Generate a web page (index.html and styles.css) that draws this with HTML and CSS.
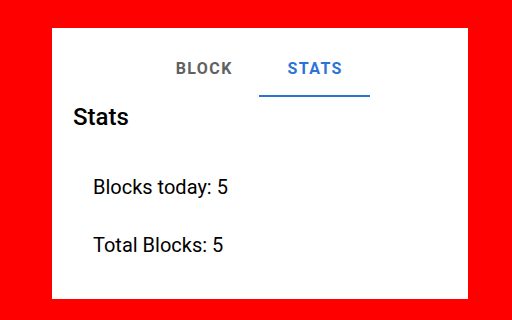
FILE: index.html
```html
<!DOCTYPE html>
<html>
<head>
<meta charset="utf-8">
<link rel="stylesheet" href="styles.css">
</head>
<body>
<div class="panel">
  <div class="tabs">
    <div class="tab">BLOCK</div>
    <div class="tab active">STATS</div>
  </div>
  <h1 class="title">Stats</h1>
  <div class="stats">
    <p class="stat">Blocks today: 5</p>
    <p class="stat">Total Blocks: 5</p>
  </div>
</div>
</body>
</html>
```
FILE: styles.css
```css
html, body {
  margin: 0;
  padding: 0;
  background: #ff0000;
  width: 512px;
  height: 320px;
  overflow: hidden;
}
body {
  padding: 28px 44px 0 52px;
  box-sizing: border-box;
  font-family: Roboto, "Liberation Sans", sans-serif;
}
.panel {
  background: #ffffff;
  width: 416px;
  height: 271px;
  box-sizing: border-box;
}
.tabs {
  display: flex;
  justify-content: center;
  padding-right: 2px;
}
.tab {
  width: 111px;
  box-sizing: border-box;
  padding: 33px 0 18px;
  line-height: 16px;
  font-size: 16px;
  font-weight: 700;
  letter-spacing: 1.4px;
  text-indent: 1.4px;
  text-align: center;
  color: #616161;
  border-bottom: 2px solid transparent;
}
.tab.active {
  color: #2b74d6;
  border-bottom-color: #2b74d6;
}
.title {
  margin: 6px 0 0 21px;
  font-size: 24px;
  line-height: 28px;
  font-weight: 500;
  color: #000;
}
.stats {
  margin-top: 44px;
  padding-left: 41px;
}
.stat {
  margin: 0;
  font-size: 20px;
  line-height: 24px;
  color: #000;
}
.stat + .stat {
  margin-top: 34px;
}
```
